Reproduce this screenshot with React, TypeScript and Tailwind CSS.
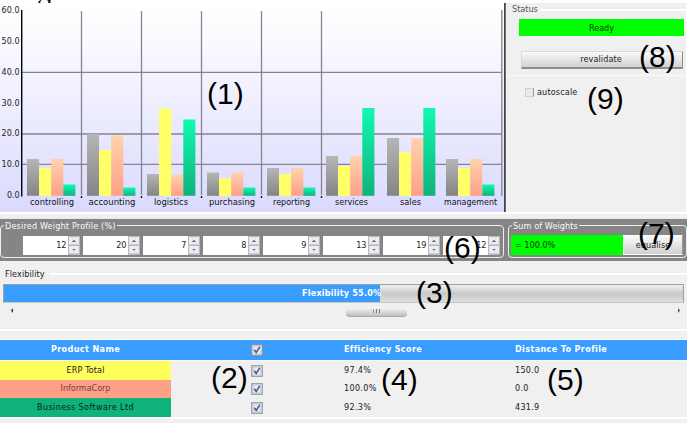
import React from "react";

type Group = { name: string; x: number; tops: [number, number, number, number]; labelX: number; labelW: number };

const groups: Group[] = [
  { name: "controlling", x: 27, tops: [159, 168, 159, 184.5], labelX: 30, labelW: 44 },
  { name: "accounting", x: 87, tops: [134, 150, 135.5, 187.5], labelX: 88.5, labelW: 47 },
  { name: "logistics", x: 147, tops: [174, 108.5, 174.5, 119.5], labelX: 154, labelW: 34 },
  { name: "purchasing", x: 207, tops: [172.5, 178.5, 172.5, 187.5], labelX: 209, labelW: 46 },
  { name: "reporting", x: 267, tops: [168, 174, 168, 187.5], labelX: 273, labelW: 37 },
  { name: "services", x: 326, tops: [156, 166, 156, 108], labelX: 335, labelW: 33 },
  { name: "sales", x: 387, tops: [138, 152.5, 138, 108], labelX: 400, labelW: 21 },
  { name: "management", x: 446, tops: [159, 168, 159, 184.5], labelX: 444, labelW: 53 },
];
const fills = ["url(#gray)", "#ffff66", "url(#pink)", "url(#green)"];
const BASE = 192.8;

function Chart() {
  return (
    <svg width="506" height="209" className="block shrink-0" fontFamily="DejaVu Sans, sans-serif" fontSize="8">
      <defs>
        <linearGradient id="bg" x1="0" y1="0" x2="0" y2="1">
          <stop offset="0" stopColor="#ffffff" />
          <stop offset="0.12" stopColor="#fcfcff" />
          <stop offset="1" stopColor="#dadaff" />
        </linearGradient>
        <linearGradient id="gray" x1="0" y1="0" x2="0" y2="1">
          <stop offset="0" stopColor="#b6b6b6" />
          <stop offset="1" stopColor="#848484" />
        </linearGradient>
        <linearGradient id="pink" x1="0" y1="0" x2="0" y2="1">
          <stop offset="0" stopColor="#ffd3ac" />
          <stop offset="1" stopColor="#ff9f88" />
        </linearGradient>
        <linearGradient id="green" x1="0" y1="0" x2="0" y2="1">
          <stop offset="0" stopColor="#10fab0" />
          <stop offset="1" stopColor="#10b27c" />
        </linearGradient>
      </defs>
      <rect width="506" height="209" fill="url(#bg)" />
      {[69.3, 131, 161.3].map((y) => (
        <line key={y} x1="22" x2="502" y1={y} y2={y} stroke="#84848c" strokeWidth="1.3" />
      ))}
      {[81.5, 141.5, 201.5, 261.5, 321.5].map((x) => (
        <g key={x}>
          <line x1={x} x2={x} y1="8" y2="192" stroke="#84848c" strokeWidth="1.3" />
          <rect x={x - 0.7} y="193" width="1.4" height="2" fill="#111" />
        </g>
      ))}
      <line x1="501.8" x2="501.8" y1="7" y2="193" stroke="#909090" strokeWidth="1.5" />
      <line x1="21.7" x2="21.7" y1="7" y2="193.5" stroke="#000" strokeWidth="1.4" />
      {["60.0", "50.0", "40.0", "30.0", "20.0", "10.0", "0.0"].map((t, i) => (
        <text key={t} x={i === 6 ? 7 : 1.5} y={10 + i * 30.85} textLength={i === 6 ? 12.5 : 18} fill="#222">{t}</text>
      ))}
      {groups.map((g) => (
        <g key={g.name}>
          {g.tops.map((t, i) => (
            <rect key={i} x={g.x + i * 12.1} y={t - 3} width="12.1" height={BASE - t + 3} fill={fills[i]} />
          ))}
          <text x={g.labelX} y="202" textLength={g.labelW} lengthAdjust="spacingAndGlyphs" fill="#111">{g.name}</text>
        </g>
      ))}
      <line x1="504.9" x2="504.9" y1="0" y2="209" stroke="#333" strokeWidth="1.6" />
    </svg>
  );
}

function Check() {
  return (
    <svg width="12" height="12" viewBox="0 0 12 12" className="block">
      <rect x="0.75" y="0.75" width="10.5" height="10.5" fill="#e6eaf0" stroke="#8b9098" strokeWidth="1.1" />
      <rect x="2.2" y="2.2" width="7.6" height="7.6" fill="none" stroke="#c6ccd6" strokeWidth="0.8" />
      <path d="M3.3 5.8 5.2 8.5 8.8 2.8" fill="none" stroke="#46568c" strokeWidth="1.5" />
    </svg>
  );
}

function Spinner({ value }: { value: string }) {
  return (
    <div className="flex h-[19px] w-[57px]">
      <div className="w-[45px] bg-white pr-[2px] text-right text-[9px] leading-[18px] tracking-[-0.3px] text-[#222]">{value}</div>
      <svg width="12" height="19" viewBox="0 0 12 19">
        <rect width="12" height="19" fill="#b8b8bc" />
        <rect x="1" y="1" width="10" height="7.5" fill="#ececf0" />
        <rect x="1" y="10" width="10" height="7.5" fill="#ececf0" />
        <path d="M3.8 6 6 3.8 8.2 6z M4.2 13 6 14.8 7.8 13z" fill="#626789" />
      </svg>
    </div>
  );
}

const rows = [
  { name: "ERP Total", color: "bg-[#ffff5c]", h: "h-[19px]", score: "97.4%", distance: "150.0", ink: "text-[#222]", ls: "tracking-[0.12px]" },
  { name: "InformaCorp", color: "bg-[#ff9f88]", h: "h-[18px]", score: "100.0%", distance: "0.0", ink: "text-[#70483e]", ls: "tracking-[-0.05px]" },
  { name: "Business Software Ltd", color: "bg-[#10b27c]", h: "h-[19px]", score: "92.3%", distance: "431.9", ink: "text-[#08251c]", ls: "tracking-[0.36px]" },
];

const notes = [
  { n: 1, at: "left-[207px] top-[78px]" },
  { n: 2, at: "left-[211px] top-[362px]" },
  { n: 3, at: "left-[416px] top-[277px]" },
  { n: 4, at: "left-[381px] top-[364px]" },
  { n: 5, at: "left-[547px] top-[364px]" },
  { n: 6, at: "left-[444px] top-[232px]" },
  { n: 7, at: "left-[638px] top-[218px]" },
  { n: 8, at: "left-[639px] top-[41px]" },
  { n: 9, at: "left-[587px] top-[83px]" },
];

const cols = "grid grid-cols-[171px_173px_171px_172px]";

export default function App() {
  return (
    <div className="relative h-[423px] w-[690px] overflow-hidden bg-white font-['DejaVu_Sans_Condensed','DejaVu_Sans',sans-serif] text-[9px] text-[#222]">
      <div className="h-[3px] overflow-hidden">
        <div className="-mt-[21px] ml-[37px] font-['Liberation_Serif',serif] text-[28px] leading-[24px] text-black">g</div>
      </div>
      <div className="flex h-[420px] w-[687px] flex-col bg-[#f0f0f0]">
        <div className="flex h-[209px]">
          <Chart />
          <div className="flex grow flex-col border-r border-white">
            <div className="flex h-[12px] items-center">
              <span className="pl-[6px] pr-[2px] leading-[12px] text-[#555]">Status</span>
              <span className="mt-px h-[2px] grow bg-white" />
            </div>
            <div className="ml-[13px] mt-[4px] h-[17px] w-[165px] bg-[#00ff00] text-center leading-[18px] text-[#053d05]">Ready</div>
            <div className="ml-[15px] mt-[15px] h-[18px] w-[162px] border border-b-2 border-[#d8d8d8] border-b-[#8c8c8c] border-r-[#8c8c8c] bg-linear-to-b from-[#fafafa] to-[#d2d2d2] pr-[2px] text-center leading-[15px] tracking-[0.1px] text-[#222]">revalidate</div>
            <div className="mt-[6px] h-px bg-[#fafafa]" />
            <div className="ml-[19px] mt-[10px] flex items-center gap-[3px]">
              <span className="h-[9px] w-[9px] border border-[#d0d0d0] border-r-[#999] bg-[#e9e9e9]" />
              <span className="leading-[12px] tracking-[0.15px]">autoscale</span>
            </div>
          </div>
        </div>
        <div className="h-[7px] border-b border-[#e8e8e8] border-t-2 border-t-white" />

        <div className="flex h-[42px] bg-[#858585] pt-[1px]">
          <div className="relative h-[40px] w-[504px] pt-[16px]">
            <div className="absolute bottom-[2px] left-0 right-0 top-[5px] rounded-sm border border-[#eeeeee]" />
            <span className="absolute left-[4px] top-0 bg-[#858585] px-px leading-[12px] tracking-[0.18px] text-[#fafafa]">Desired Weight Profile (%)</span>
            <div className="relative flex gap-[3px] pl-[23px]">
              {["12", "20", "7", "8", "9", "13", "19", "12"].map((v, i) => <Spinner key={i} value={v} />)}
            </div>
          </div>
          <div className="relative ml-[4px] h-[40px] grow pt-[15px]">
            <div className="absolute bottom-[2px] left-0 right-0 top-[5px] rounded-sm border border-[#eeeeee]" />
            <span className="absolute left-[4px] top-0 bg-[#858585] px-px leading-[12px] tracking-[0.1px] text-[#fafafa]">Sum of Weights</span>
            <div className="relative flex h-[20px] pl-[3px]">
              <div className="w-[112px] bg-[#00ff00] pl-[4px] leading-[20px] text-[#063c06]">= 100.0%</div>
              <div className="w-[60px] border border-[#fafafa] border-r-[#999] bg-linear-to-b from-[#fafafa] to-[#d0d0d0] text-center leading-[19px] tracking-[0.1px]">equalise</div>
            </div>
          </div>
        </div>

        <div className="h-[70px] border-b-2 border-white pt-[6px]">
          <div className="flex h-[14px] items-center">
            <span className="px-[5px] leading-[12px] tracking-[0.1px]">Flexibility</span>
            <span className="h-[2px] grow bg-white" />
          </div>
          <div className="ml-[3px] mt-[3px] flex h-[19px] w-[681px] border border-[#a0a0a0] border-b-[#c8c8c8] bg-linear-to-b from-[#efefef] via-[#c9c9c9] to-[#dedede]">
            <div className="w-[376px] whitespace-nowrap bg-[#399cff] pl-[298px] font-bold leading-[16px] tracking-[0.2px] text-white">Flexibility 55.0%</div>
          </div>
          <div className="flex h-[15px] items-start pl-[10px] pr-[6px]">
            <svg width="4" height="15"><path d="M3 5 1 7.5 3 10z" fill="#333" /></svg>
            <div className="ml-[332px] mt-[5px] flex h-[9px] w-[61px] justify-center gap-[2px] rounded-sm border-b border-[#aaa] bg-linear-to-b from-[#f3f3f3] to-[#c0c0c0] pt-px">
              <i className="h-[4px] w-px bg-[#999]" /><i className="h-[4px] w-px bg-[#777]" /><i className="h-[4px] w-px bg-[#777]" />
            </div>
            <svg width="4" height="15" className="ml-auto"><path d="M1 5 3 7.5 1 10z" fill="#555" /></svg>
          </div>
        </div>

        <div className="mt-[8px] border-t border-white">
          <div className={`${cols} h-[20px] items-center bg-[#399cff] font-bold text-white`}>
            <span className="text-center tracking-[0.37px]">Product Name</span>
            <span className="flex justify-end pr-[81px]"><Check /></span>
            <span className="tracking-[0.33px]">Efficiency Score</span>
            <span className="tracking-[0.36px]">Distance To Profile</span>
          </div>
          <div className="h-px bg-[#f7f7f7]" />
          {rows.map((r) => (
            <div key={r.name} className={`${cols} ${r.h} items-center`}>
              <span className={`${r.color} ${r.ink} ${r.ls} flex h-full items-center justify-center`}>{r.name}</span>
              <span className="flex justify-end pr-[81px]"><Check /></span>
              <span className="tracking-[0.3px]">{r.score}</span>
              <span className="tracking-[0.25px]">{r.distance}</span>
            </div>
          ))}
          <div className="h-[2px] bg-white" />
        </div>
      </div>
      {notes.map(({ n, at }) => (
        <span key={n} className={`${at} absolute whitespace-nowrap font-['Liberation_Sans',Arial,sans-serif] text-[30px] leading-[32px] text-black`}>({n})</span>
      ))}
    </div>
  );
}
